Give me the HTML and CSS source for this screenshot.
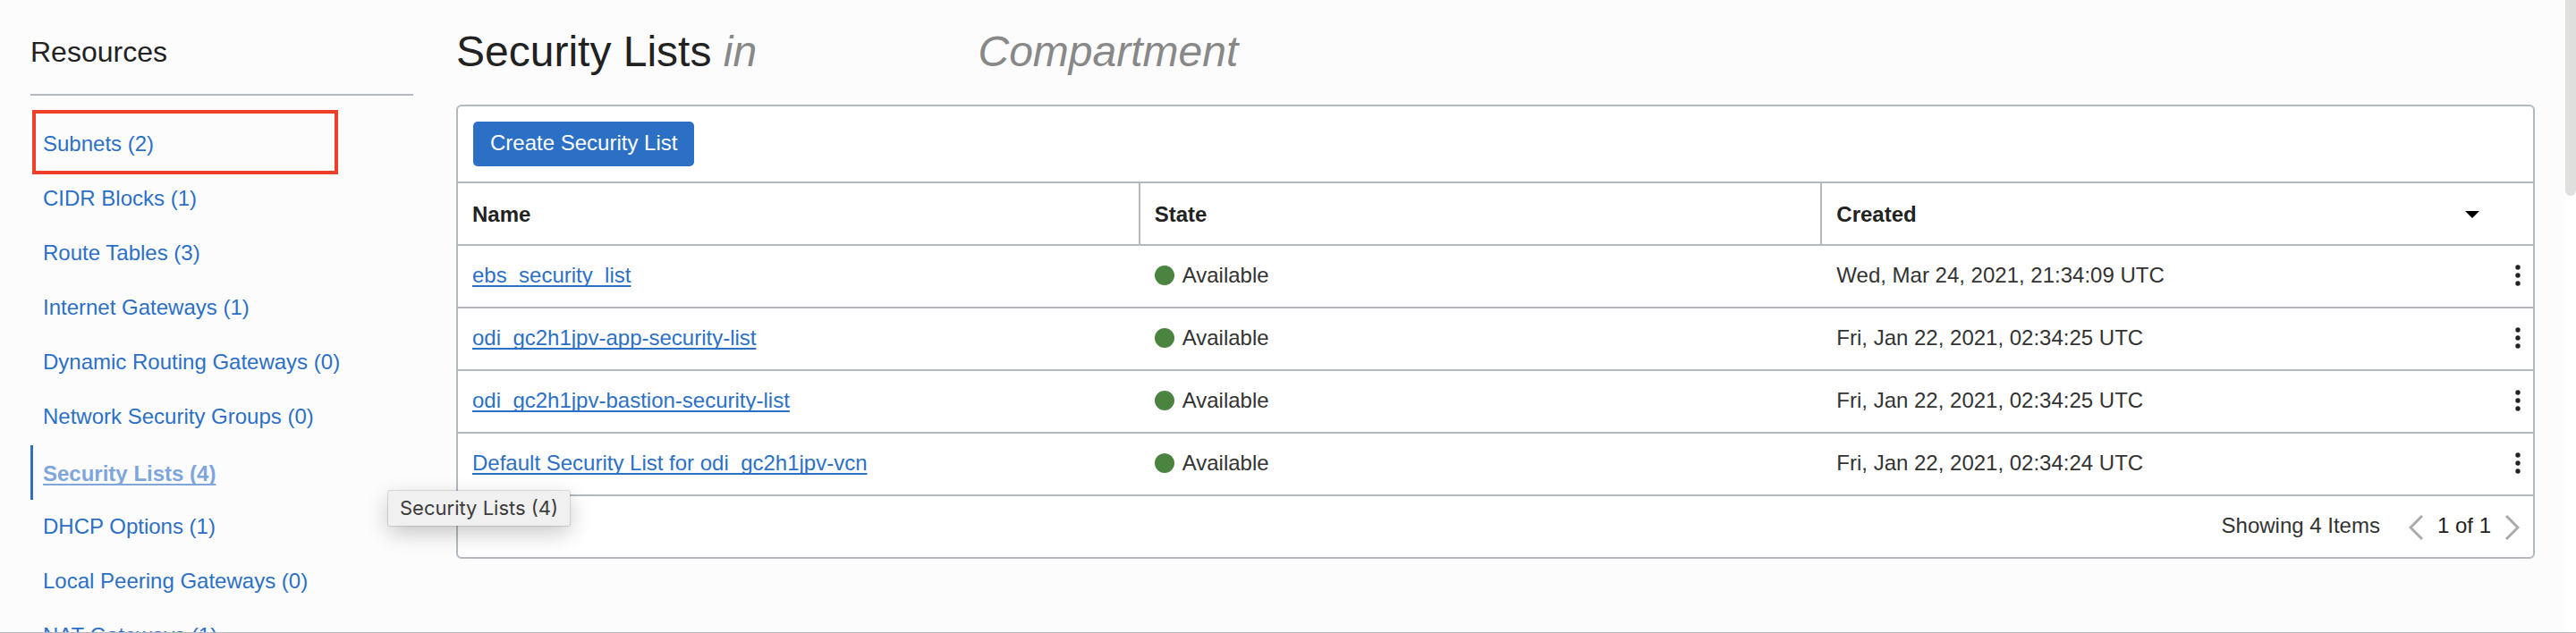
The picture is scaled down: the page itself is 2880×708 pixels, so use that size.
FILE: index.html
```html
<!DOCTYPE html>
<html lang="en">
<head>
<meta charset="utf-8">
<title>Security Lists</title>
<link rel="stylesheet" href="styles.css">
</head>
<body>
<div class="app">
  <aside class="sidebar">
    <h2 class="sidebar-title">Resources</h2>
    <nav aria-label="Resources">
      <ul class="nav-list">
        <li class="nav-item highlighted"><a href="#subnets">Subnets (2)</a></li>
        <li class="nav-item"><a href="#cidr">CIDR Blocks (1)</a></li>
        <li class="nav-item"><a href="#routes">Route Tables (3)</a></li>
        <li class="nav-item"><a href="#internet">Internet Gateways (1)</a></li>
        <li class="nav-item"><a href="#dynamic">Dynamic Routing Gateways (0)</a></li>
        <li class="nav-item"><a href="#groups">Network Security Groups (0)</a></li>
        <li class="nav-item active">
          <a href="#lists" aria-current="page">Security Lists (4)</a>
          <span class="tooltip" role="tooltip">Security Lists (4)</span>
        </li>
        <li class="nav-item"><a href="#dhcp">DHCP Options (1)</a></li>
        <li class="nav-item"><a href="#peering">Local Peering Gateways (0)</a></li>
        <li class="nav-item"><a href="#nat">NAT Gateways (1)</a></li>
      </ul>
    </nav>
  </aside>
  <main class="main">
    <h1 class="page-title">Security Lists <em class="context">in</em> <em class="context compartment">Compartment</em></h1>
    <section class="panel">
      <div class="toolbar"><button class="primary" type="button">Create Security List</button></div>
      <table class="lists">
        <thead>
          <tr>
            <th scope="col">Name</th>
            <th scope="col">State</th>
            <th scope="col" aria-sort="descending">
              <div class="sort-head">Created
                <svg class="caret" viewBox="0 0 16 8" aria-hidden="true"><path d="M0 0H16L8 8Z"/></svg>
              </div>
            </th>
            <th class="actions"></th>
          </tr>
        </thead>
        <tbody>
          <tr>
            <td><a href="#ebs">ebs_security_list</a></td>
            <td><span class="state">Available</span></td>
            <td>Wed, Mar 24, 2021, 21:34:09 UTC</td>
            <td class="actions"><button class="menu" type="button" aria-label="Actions"><svg viewBox="0 0 6 24"><circle cx="3" cy="3" r="2.7"/><circle cx="3" cy="12" r="2.7"/><circle cx="3" cy="21" r="2.7"/></svg></button></td>
          </tr>
          <tr>
            <td><a href="#app">odi_gc2h1jpv-app-security-list</a></td>
            <td><span class="state">Available</span></td>
            <td>Fri, Jan 22, 2021, 02:34:25 UTC</td>
            <td class="actions"><button class="menu" type="button" aria-label="Actions"><svg viewBox="0 0 6 24"><circle cx="3" cy="3" r="2.7"/><circle cx="3" cy="12" r="2.7"/><circle cx="3" cy="21" r="2.7"/></svg></button></td>
          </tr>
          <tr>
            <td><a href="#bastion">odi_gc2h1jpv-bastion-security-list</a></td>
            <td><span class="state">Available</span></td>
            <td>Fri, Jan 22, 2021, 02:34:25 UTC</td>
            <td class="actions"><button class="menu" type="button" aria-label="Actions"><svg viewBox="0 0 6 24"><circle cx="3" cy="3" r="2.7"/><circle cx="3" cy="12" r="2.7"/><circle cx="3" cy="21" r="2.7"/></svg></button></td>
          </tr>
          <tr>
            <td><a href="#default">Default Security List for odi_gc2h1jpv-vcn</a></td>
            <td><span class="state">Available</span></td>
            <td>Fri, Jan 22, 2021, 02:34:24 UTC</td>
            <td class="actions"><button class="menu" type="button" aria-label="Actions"><svg viewBox="0 0 6 24"><circle cx="3" cy="3" r="2.7"/><circle cx="3" cy="12" r="2.7"/><circle cx="3" cy="21" r="2.7"/></svg></button></td>
          </tr>
        </tbody>
      </table>
      <div class="pager">
        <span class="count">Showing 4 Items</span>
        <button class="page-button" type="button" aria-label="Previous page" disabled><svg viewBox="0 0 16 28"><path d="M15 1L2 14L15 27"/></svg></button>
        <span class="page">1 of 1</span>
        <button class="page-button" type="button" aria-label="Next page" disabled><svg viewBox="0 0 16 28"><path d="M1 1L14 14L1 27"/></svg></button>
      </div>
    </section>
  </main>
  <div class="scroll-track" aria-hidden="true"><div class="scroll-thumb"></div></div>
</div>
</body>
</html>
```

FILE: styles.css
```css
*,
*::before,
*::after {
  box-sizing: border-box;
}

body {
  margin: 0;
  background: #fcfcfc;
  color: #333;
  font: 24px/28px "Liberation Sans", Arial, sans-serif;
}

a {
  color: #2c70c6;
}

button {
  font: inherit;
  border: 0;
  padding: 0;
  background: none;
}

svg {
  display: block;
}

.app {
  display: flex;
  height: 100vh;
  overflow: hidden;
  border-bottom: 1px solid #b4b8bf;
}

.sidebar {
  flex: none;
  width: 462px;
  padding: 38px 0 0 34px;
}

.sidebar-title {
  margin: 0 0 25px;
  padding-bottom: 27px;
  border-bottom: 2px solid #b4b8bf;
  color: #222;
  font-size: 32px;
  line-height: 40px;
  font-weight: 300;
}

.nav-list {
  margin: 0;
  padding: 0;
  list-style: none;
}

.nav-item {
  position: relative;
  height: 61px;
  padding: 15px 0 0 11px;
  border-left: 3px solid transparent;
}

.nav-item a {
  text-decoration: none;
}

.highlighted::after {
  content: "";
  position: absolute;
  top: -9px;
  left: -1px;
  width: 342px;
  height: 72px;
  border: 4px solid #ee4028;
  pointer-events: none;
}

.nav-item.active {
  margin-bottom: 1px;
  padding-top: 18px;
  border-left-color: #2c70c6;
}

.nav-item.active a {
  color: #7fa6dc;
  font-weight: bold;
  text-decoration: underline;
  text-decoration-thickness: 2px;
  text-decoration-skip-ink: none;
  text-underline-offset: 3px;
}

.tooltip {
  position: absolute;
  z-index: 1;
  top: 51px;
  left: 397px;
  padding: 5px 13px 6px;
  border-radius: 2px;
  background: #f0f0f0;
  box-shadow: 0 0 1px 1px rgba(0, 0, 0, 0.12), 0 8px 24px rgba(0, 0, 0, 0.22);
  color: #3c3c3c;
  font-family: Inter, "Liberation Sans", sans-serif;
  font-size: 22px;
  white-space: nowrap;
}

.main {
  flex: 1;
  min-width: 0;
  padding: 30px 34px 0 48px;
}

.page-title {
  margin: 0 0 31px;
  color: #222;
  font-size: 48px;
  line-height: 56px;
  font-weight: 400;
}

.context {
  color: #888;
}

.compartment {
  margin-left: 234px;
}

.panel {
  border: 2px solid #b4b8bf;
  border-radius: 6px;
  background: #fff;
}

.toolbar {
  padding: 17px;
}

.primary {
  display: block;
  padding: 10px 19px 12px;
  border-radius: 5px;
  background: #2c70c6;
  color: #fff;
}

.lists {
  width: 100%;
  table-layout: fixed;
  border-spacing: 0;
}

.lists th,
.lists td {
  padding: 19px 16px 21px;
  border-top: 2px solid #b4b8bf;
  text-align: left;
}

.lists th {
  padding: 21px 16px 19px;
  border-right: 2px solid #b4b8bf;
  color: #222;
}

.lists th:nth-child(3),
.lists th:nth-child(4) {
  border-right: 0;
}

.lists .actions {
  width: 32px;
  padding-left: 0;
  padding-right: 0;
}

.lists td a {
  text-decoration-thickness: 2px;
  text-decoration-skip-ink: none;
  text-underline-offset: 3px;
}

.sort-head {
  display: flex;
  justify-content: space-between;
  align-items: center;
  padding-right: 12px;
}

.caret {
  width: 16px;
  height: 8px;
  fill: #000;
}

.state {
  display: flex;
  align-items: center;
  gap: 9px;
}

.state::before {
  content: "";
  width: 22px;
  height: 22px;
  border-radius: 50%;
  background: #4b8440;
}

.menu {
  display: block;
  margin-left: 12px;
}

.menu svg {
  width: 6px;
  height: 24px;
  fill: #222;
}

.pager {
  display: flex;
  justify-content: flex-end;
  padding: 19px 15px 21px;
  border-top: 2px solid #b4b8bf;
}

.count {
  margin-right: 32px;
}

.page {
  margin: 0 16px;
  color: #222;
}

.page-button {
  align-self: flex-end;
  height: 26px;
}

.page-button svg {
  width: 16px;
  height: 28px;
  fill: none;
  stroke: #aaa;
  stroke-width: 3;
}

.scroll-track {
  flex: none;
  width: 12px;
  background: #fff;
}

.scroll-thumb {
  height: 31%;
  border-radius: 0 0 6px 6px;
  background: #dfdfde;
}
```
